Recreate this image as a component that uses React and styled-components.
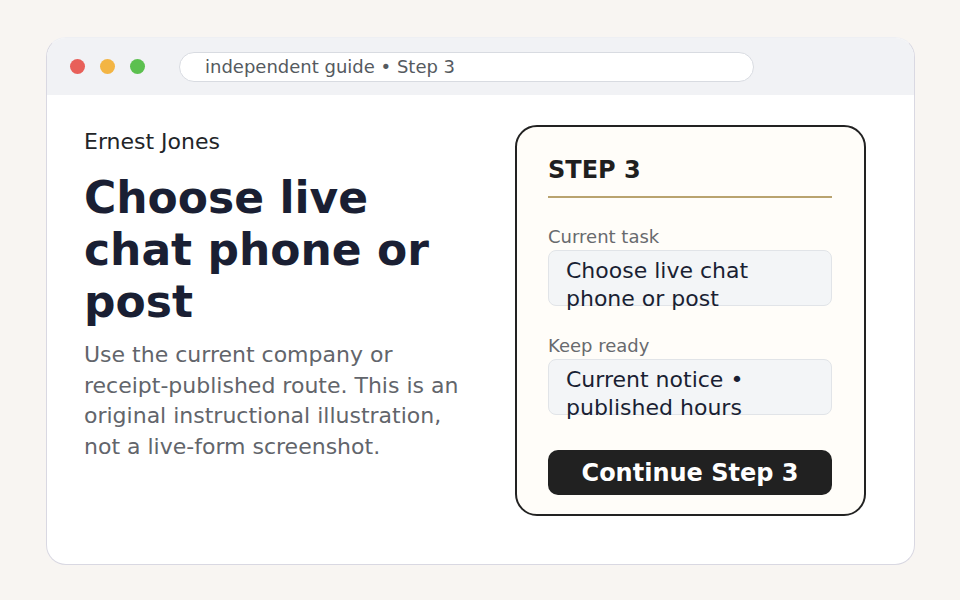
import React from "react"
import styled, { createGlobalStyle } from "styled-components"

const Global = createGlobalStyle`
  html, body {
    margin: 0;
    padding: 0;
    background: #f8f5f2;
    font-family: "DejaVu Sans", "Liberation Sans", sans-serif;
  }
`

const fields = [
  { label: "Current task", value: "Choose live chat phone or post" },
  { label: "Keep ready", value: "Current notice • published hours" },
]

export default function App() {
  return (
    <>
      <Global />
      <Page>
        <Window>
          <TitleBar>
            <Dots>
              <Dot color="#e8605a" />
              <Dot color="#f3b544" />
              <Dot color="#5cc04f" />
            </Dots>
            <Address>independent guide • Step 3</Address>
          </TitleBar>
          <Content>
            <Intro>
              <Author>Ernest Jones</Author>
              <Headline>Choose live chat phone or post</Headline>
              <Lead>
                Use the current company or receipt-published route. This is an
                original instructional illustration, not a live-form screenshot.
              </Lead>
            </Intro>
            <Card>
              <StepTitle>STEP 3</StepTitle>
              {fields.map((f) => (
                <Field key={f.label}>
                  <FieldLabel>{f.label}</FieldLabel>
                  <FieldBox>{f.value}</FieldBox>
                </Field>
              ))}
              <ContinueButton>Continue Step 3</ContinueButton>
            </Card>
          </Content>
        </Window>
      </Page>
    </>
  )
}

const Page = styled.div`
  width: 960px;
  height: 600px;
  padding: 37px 45px 35px 46px;
  box-sizing: border-box;
`

const Window = styled.div`
  height: 528px;
  background: #ffffff;
  border: 1.5px solid #d9d8e2;
  border-top-color: #eeeff3;
  border-radius: 20px;
  overflow: hidden;
  box-sizing: border-box;
  display: flex;
  flex-direction: column;
`

const TitleBar = styled.div`
  height: 57px;
  background: #f1f2f5;
  display: flex;
  align-items: center;
  padding-left: 23px;
  flex-shrink: 0;
`

const Dots = styled.div`
  display: flex;
  gap: 15px;
  margin-right: 34px;
`

const Dot = styled.span`
  width: 15px;
  height: 15px;
  border-radius: 50%;
  background: ${(p) => p.color};
`

const Address = styled.div`
  width: 575px;
  height: 30px;
  box-sizing: border-box;
  background: #ffffff;
  border: 1px solid #d8dbe1;
  border-radius: 15px;
  padding-left: 25px;
  display: flex;
  align-items: center;
  font-size: 18px;
  color: #555a60;
`

const Content = styled.div`
  display: grid;
  grid-template-columns: 380px 351px;
  column-gap: 51px;
  padding: 30px 0 0 37px;
  align-items: start;
`

const Intro = styled.div`
  padding-top: 4px;
`

const Author = styled.div`
  font-size: 22px;
  line-height: 26px;
  color: #222428;
`

const Headline = styled.h1`
  margin: 17px 0 12px;
  font-size: 44px;
  line-height: 52px;
  font-weight: 700;
  color: #1a1f33;
`

const Lead = styled.p`
  margin: 0;
  font-size: 22px;
  line-height: 30.7px;
  color: #62656b;
`

const Card = styled.div`
  border: 2px solid #222222;
  border-radius: 22px;
  background: #fffdf9;
  padding: 28px 32px 19px 31px;
  display: flex;
  flex-direction: column;
`

const StepTitle = styled.div`
  font-size: 24px;
  line-height: 30px;
  font-weight: 700;
  color: #1f1f1f;
  padding-bottom: 11px;
  border-bottom: 2px solid #b9a36f;
  margin-bottom: 28px;
`

const Field = styled.div`
  display: flex;
  flex-direction: column;
  gap: 2px;
  margin-bottom: 29px;

  &:last-of-type {
    margin-bottom: 35px;
  }
`

const FieldLabel = styled.div`
  font-size: 18px;
  line-height: 22px;
  color: #686a6e;
`

const FieldBox = styled.div`
  height: 56px;
  box-sizing: border-box;
  background: #f3f5f7;
  border: 1px solid #e1e4e8;
  border-radius: 8px;
  padding: 6px 16px 0 17px;
  font-size: 22px;
  line-height: 28px;
  color: #1a1f33;
`

const ContinueButton = styled.button`
  height: 45px;
  border: none;
  border-radius: 10px;
  background: #212121;
  color: #ffffff;
  font-family: inherit;
  font-size: 24px;
  font-weight: 700;
  cursor: pointer;
`
